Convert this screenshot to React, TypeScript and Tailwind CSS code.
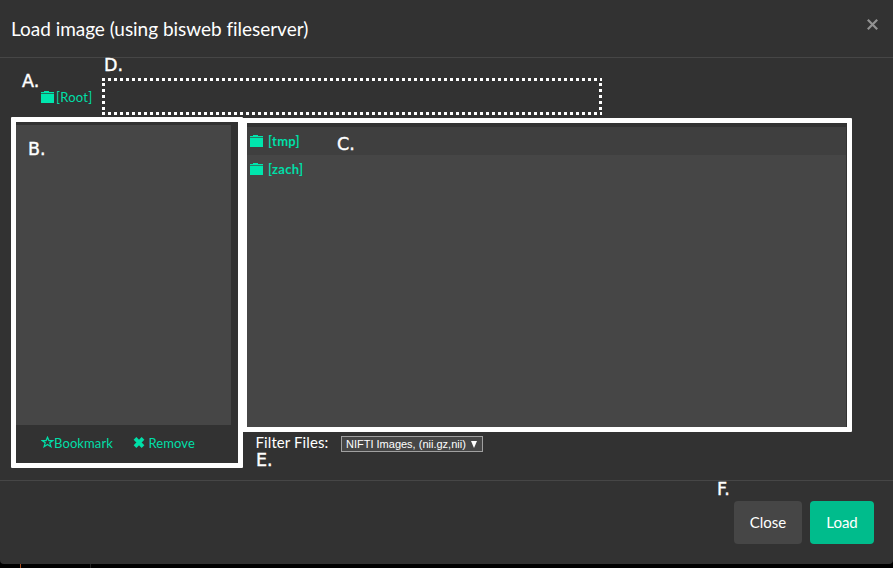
import type { ReactNode } from "react";

function Folder() {
  return (
    <svg className="block h-[12px] w-[14px] shrink-0" viewBox="0 0 14 12" fill="#00e5ad" shapeRendering="crispEdges">
      <path d="M3 0h5v1h5v1H0V1h3z" />
      <path d="M0 2h13v1H0z" opacity=".35" />
      <path d="M0 3h13v9H0z" />
    </svg>
  );
}

function Label({ children, className }: { children: ReactNode; className: string }) {
  return (
    <span className={`absolute z-20 font-['DejaVu_Sans',sans-serif] text-[17.5px] leading-[14px] text-white [-webkit-text-stroke:0.4px_white] ${className}`}>
      {children}
    </span>
  );
}

export default function App() {
  return (
    <div className="relative h-[568px] w-[893px] overflow-hidden bg-black font-['Lato',sans-serif] text-[15px] text-white">
      <div className="flex h-[564px] flex-col rounded-b-[4px] bg-[#323232]">
        <header className="flex h-[58px] shrink-0 justify-between border-b border-[#464646] pr-[14px] pl-[11px]">
          <h1 className="pt-[17px] text-[19px] leading-[24px] tracking-[-0.03px] [font-variant-ligatures:common-ligatures]">Load image (using bisweb fileserver)</h1>
          <svg className="mt-[19px] h-[11px] w-[13px]" viewBox="0 0 13 11" stroke="#929292" strokeWidth="2.2">
            <path d="M1.8.8l9.4 9.4M11.2.8L1.8 10.2" />
          </svg>
        </header>

        <main className="flex h-[423px] shrink-0 flex-col border-b border-[#464646]">
          <div className="flex h-[59px] shrink-0 pt-[20px] pl-[41px]">
            <a className="flex w-[61px] pt-[13px] text-[13px] leading-[14px] tracking-[0.25px] text-[#00dfa8]">
              <Folder />
              <span className="-mt-px ml-[1px]">[Root]</span>
            </a>
            <svg className="h-[37px] w-[500px]" viewBox="0 0 500 37" fill="none" stroke="white" strokeWidth="3" strokeDasharray="3 3">
              <path d="M0 1.5h500M0 35.5h500" />
              <path d="M1.5 5v30M498.5 5v30" />
            </svg>
          </div>
          <div className="flex items-start pl-[11px]">
            <section className="relative z-10 h-[351px] w-[232px] shrink-0 rounded-[1px] border-[5px] border-white pt-[3px]">
              <div className="h-[300px] w-[215px] bg-[#464646]" />
              <div className="flex pt-[10px] pl-[25px] text-[13px] leading-[16px] tracking-[0.1px] text-[#00dfa8]">
                <a className="flex w-[92px]">
                  <svg className="mt-[1px] h-[12px] w-[13px]" viewBox="0 0 13 12" fill="none" stroke="currentColor" strokeWidth="1.25">
                    <path d="M6.5 1.3l1.4 3.3h4L8.8 6.8l1.1 3.9-3.4-2.2-3.4 2.2 1.1-3.9-3.1-2.2h4z" />
                  </svg>
                  Bookmark
                </a>
                <a className="flex">
                  <svg className="mt-[2px] mr-[3.5px] h-[11px] w-[12px]" viewBox="0 0 12 11" stroke="currentColor" strokeWidth="3.8">
                    <path d="M2 1.4l8 8.2M10 1.4L2 9.6" />
                  </svg>
                  Remove
                </a>
              </div>
            </section>
            <div className="-ml-px w-[610px] pt-px">
              <section className="h-[314px] rounded-[1px] border-[5px] border-white pt-[4px] pr-px text-[13px] font-bold tracking-[0.3px] text-[#00dfa8]">
                <div className="flex h-[28px] bg-[#3f3f3f] pt-[8px] pl-[3px] leading-[14px]">
                  <Folder /><span className="-mt-px ml-[4px]">[tmp]</span>
                </div>
                <div className="flex h-[272px] bg-[#464646] pt-[8px] pl-[3px] leading-[14px]">
                  <Folder /><span className="-mt-px ml-[4px]">[zach]</span>
                </div>
              </section>
              <div className="flex pl-[13.5px]">
                <span className="w-[85.5px] text-[15px] leading-[20px] tracking-[0.1px]">Filter Files:</span>
                <div className="mt-[4px] flex h-[16px] w-[142px] items-center border border-[#a0a0a0] bg-[#464646] pl-[4px] font-['Liberation_Sans',Arial,sans-serif] text-[11px] leading-[14px] whitespace-nowrap">
                  <span className="w-[125px]">NIFTI Images, (nii.gz,nii)</span>
                  <svg className="h-[7px] w-[6px]" viewBox="0 0 6 7" fill="white"><path d="M0 0h6L3 7z" /></svg>
                </div>
              </div>
            </div>
          </div>
        </main>

        <footer className="flex justify-end gap-[8px] pt-[20px] pr-[19px]">
          <button className="h-[43px] w-[68px] rounded-[4px] bg-[#464646] text-[15px]">Close</button>
          <button className="h-[43px] w-[64px] rounded-[4px] bg-[#00bc8c] text-[15px]">Load</button>
        </footer>
      </div>
      <div className="flex h-[4px] pl-[20px]">
        <i className="w-px bg-[#a84a1c]" />
        <i className="ml-[69px] w-px bg-[#222222]" />
      </div>

      <Label className="top-[74px] left-[22px]">A.</Label>
      <Label className="top-[142px] left-[28px]">B.</Label>
      <Label className="top-[137px] left-[337px]">C.</Label>
      <Label className="top-[58px] left-[104px]">D.</Label>
      <Label className="top-[453px] left-[256px]">E.</Label>
      <Label className="top-[482px] left-[717px]">F.</Label>
    </div>
  );
}
